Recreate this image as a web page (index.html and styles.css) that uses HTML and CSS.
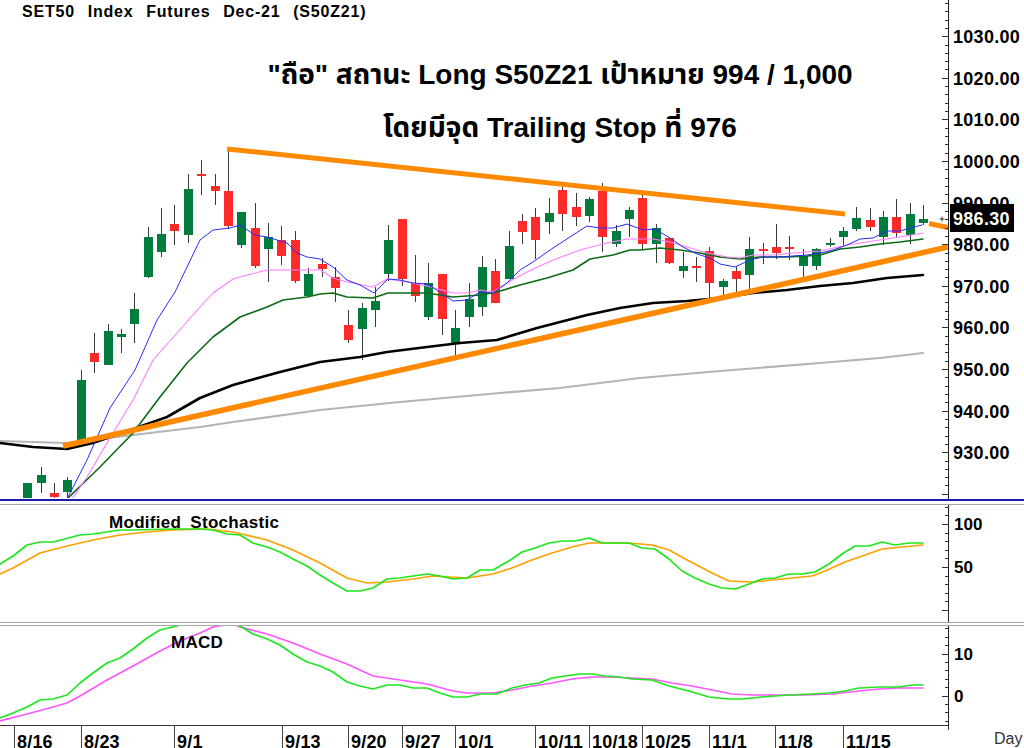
FILE: index.html
```html
<!DOCTYPE html>
<html lang="th">
<head>
<meta charset="utf-8">
<title>SET50 Index Futures Dec-21 (S50Z21)</title>
<link rel="stylesheet" href="styles.css">
</head>
<body>
<div class="chart">
  <div class="pane pane-main">
    <svg class="plot" id="plot-main" width="949" height="499"></svg>
    <svg class="axis" id="axis-main" width="75" height="499"></svg>
    <div class="title">SET50 Index Futures Dec-21 (S50Z21)</div>
    <div class="note">
      <p>"ถือ" สถานะ Long S50Z21 เป้าหมาย 994 / 1,000</p>
      <p>โดยมีจุด Trailing Stop ที่ 976</p>
    </div>
  </div>
  <div class="sep-blue"></div>
  <div class="sep-gray"></div>
  <div class="pane pane-stoch">
    <svg class="plot" id="plot-stoch" width="949" height="117"></svg>
    <svg class="axis" id="axis-stoch" width="75" height="117"></svg>
  </div>
  <div class="sep-double"></div>
  <div class="pane pane-macd">
    <svg class="plot" id="plot-macd" width="949" height="99"></svg>
    <svg class="axis" id="axis-macd" width="75" height="99"></svg>
  </div>
  <svg class="dates" id="dates" width="1024" height="24"></svg>
</div>
<script src="script.js"></script>
</body>
</html>
```
FILE: styles.css
```css
html, body {
  margin: 0;
  padding: 0;
  background: #ffffff;
}
.chart {
  width: 1024px;
  height: 748px;
  overflow: hidden;
  display: flex;
  flex-direction: column;
  font-family: "Liberation Sans", Arial, "Noto Sans Thai", "Noto Sans", sans-serif;
  color: #000;
}
.pane {
  display: flex;
  flex-direction: row;
  position: relative;
  flex: none;
}
.pane-main { height: 499px; }
.pane-stoch { height: 117px; }
.pane-macd { height: 99px; }
.plot, .axis, .dates { display: block; flex: none; }
.sep-blue {
  height: 2px;
  background: #1c1ca8;
  flex: none;
}
.sep-gray {
  height: 3px;
  border-bottom: 1px solid #a8a8a8;
  flex: none;
}
.sep-double {
  height: 2px;
  border-top: 1px solid #a8a8a8;
  border-bottom: 1px solid #a8a8a8;
  flex: none;
}
.title {
  position: absolute;
  left: 22px;
  top: 3px;
  font-size: 16px;
  line-height: 18px;
  font-weight: 700;
  letter-spacing: 0.8px;
  word-spacing: 7.5px;
  white-space: nowrap;
}
.note {
  position: absolute;
  left: 260px;
  top: 48px;
  width: 600px;
  text-align: center;
  font-size: 28px;
  font-weight: 700;
  line-height: 53px;
  white-space: nowrap;
}
.note p { margin: 0; }
.lbl-axis {
  font-size: 18px;
  font-weight: 700;
  letter-spacing: 0.3px;
}
.lbl-small {
  font-size: 17px;
  font-weight: 700;
}
.lbl-pane {
  font-size: 17px;
  font-weight: 700;
  word-spacing: 4px;
  letter-spacing: 0.3px;
}
.lbl-date {
  font-size: 18px;
  font-weight: 700;
  letter-spacing: 0.2px;
}
.lbl-day {
  font-size: 16px;
  font-weight: 400;
  fill: #333;
}
.lbl-price {
  font-size: 18px;
  font-weight: 700;
  fill: #fff;
  letter-spacing: 0.3px;
}
```
FILE: script.js
```js
(function () {
  var X0 = 14, DX = 13.37;
  function cx(i) { return X0 + DX * i; }

  // [index, bodyTop, bodyBottom, wickTop, wickBottom, up?]
  var candles = [
    [1,483,500,483,500,1],[2,475,483,467,493,1],[3,493,497,483,499,0],[4,480,492,477,499,1],
    [5,380,440,370,440,1],[6,353,362,333,373,0],[7,331,365,324,365,1],[8,334,337,329,353,1],
    [9,309,324,293,343,1],[10,237,277,227,278,1],[11,234,252,208,257,1],[12,224,231,205,245,0],
    [13,189,235,174,243,1],[14,174,176,160,195,0],[15,186,191,174,205,0],[16,191,226,148,229,0],
    [17,212,245,212,248,1],[18,228,266,203,268,0],[19,237,249,223,282,1],[20,240,256,226,265,0],
    [21,240,281,231,283,0],[22,274,296,268,296,1],[23,264,269,258,277,0],[24,277,288,267,302,0],
    [25,325,340,310,343,0],[26,308,329,303,360,1],[27,301,310,287,327,1],[28,240,274,225,281,1],
    [29,219,279,219,286,0],[30,283,296,255,302,0],[31,283,317,263,320,1],[32,274,319,274,335,0],
    [33,328,343,310,360,1],[34,299,317,283,327,1],[35,267,307,256,316,1],[36,271,303,259,303,0],
    [37,246,279,231,279,1],[38,221,232,214,244,0],[39,217,240,208,259,0],[40,213,222,198,234,1],
    [41,190,214,187,231,0],[42,207,217,193,226,0],[43,199,216,197,222,1],[44,191,237,183,252,0],
    [45,231,244,225,247,1],[46,210,219,207,237,1],[47,198,244,195,249,0],[48,228,244,224,263,1],
    [49,238,263,238,264,0],[50,266,271,252,278,1],[51,266,267,257,282,0],[52,251,283,247,298,0],
    [53,281,287,279,297,1],[54,271,279,266,296,0],[55,249,275,237,292,1],[56,249,251,243,264,0],
    [57,247,253,224,259,0],[58,247,249,236,260,0],[59,256,266,249,280,1],[60,249,266,248,270,1],
    [61,243,245,238,247,1],[62,231,237,227,245,1],[63,218,229,207,231,1],[64,220,227,208,231,0],
    [65,217,237,211,245,1],[66,217,233,199,237,0],[67,214,235,203,244,1],[68,219,223,205,225,1]
  ];

  var blue = [[67,499],[87,460],[110,408],[135,370],[157,320],[175,292],[200,240],[213,230],[230,228],[240,225],[255,235],[267,237],[287,243],[297,253],[307,257],[320,259],[333,267],[347,280],[360,285],[374,293],[388,279],[400,280],[413,283],[427,284],[440,292],[453,301],[467,300],[480,292],[493,293],[507,283],[520,270],[533,262],[553,248],[573,235],[587,226],[600,228],[613,228],[627,224],[643,230],[655,229],[670,238],[683,247],[697,254],[710,258],[720,264],[735,267],[750,260],[763,257],[777,257],[793,256],[807,255],[820,253],[833,250],[847,245],[860,239],[873,238],[887,231],[900,231],[910,228],[922,225]];
  var pink = [[72,499],[87,477],[107,443],[133,400],[153,360],[177,333],[200,307],[213,293],[233,279],[247,275],[267,270],[293,270],[320,270],[333,278],[347,282],[373,287],[387,279],[407,282],[427,286],[453,293],[467,293],[480,290],[493,292],[507,283],[527,272],[553,260],[580,250],[607,243],[627,239],[653,239],[670,242],[687,247],[707,253],[727,257],[740,258],[753,255],[773,255],[793,253],[820,251],[847,245],[873,241],[900,237],[923,233]];
  var dgreen = [[67,499],[100,467],[133,433],[160,397],[187,363],[213,337],[240,317],[267,307],[283,300],[307,297],[320,294],[333,293],[347,297],[373,298],[388,293],[400,293],[427,293],[453,297],[480,295],[497,292],[520,285],[547,278],[573,270],[590,259],[613,255],[630,250],[640,250],[660,248],[680,250],[700,253],[720,257],[740,259],[760,257],[787,257],[807,256],[820,255],[840,249],[860,247],[880,244],[900,242],[923,239]];
  var black = [[0,443],[33,447],[67,449],[93,443],[133,429],[167,417],[200,398],[233,385],[280,372],[320,362],[360,357],[387,352],[427,347],[460,343],[497,340],[537,328],[587,315],[620,308],[653,303],[687,301],[720,298],[753,293],[787,290],[820,286],[853,283],[887,278],[923,275]];
  var gray = [[0,441],[67,443],[133,435],[200,427],[233,422],[320,410],[400,402],[500,393],[560,388],[640,378],[720,371],[820,363],[880,358],[923,353]];

  var stK = [[0,563],[13,555],[27,544],[40,541],[53,541],[80,534],[93,533],[120,529],[133,529],[173,528],[200,528],[213,529],[227,533],[240,534],[253,542],[267,546],[280,551],[293,558],[307,565],[320,574],[333,582],[347,590],[360,590],[373,587],[387,578],[400,577],[413,575],[427,573],[440,575],[453,578],[467,577],[480,569],[493,569],[512,558],[522,551],[535,547],[549,542],[562,540],[575,540],[589,537],[602,542],[615,542],[629,542],[642,547],[655,548],[669,558],[682,570],[695,577],[709,583],[722,587],[735,588],[749,583],[762,578],[775,577],[789,573],[802,573],[815,571],[829,563],[842,553],[855,545],[869,545],[882,541],[895,544],[909,542],[923,542]];
  var stD = [[0,573],[13,567],[40,552],[67,545],[93,539],[120,534],[147,531],[173,529],[207,528],[233,531],[267,539],[293,549],[320,562],[347,577],[367,582],[387,581],[413,578],[433,575],[467,577],[493,573],[512,567],[532,559],[552,552],[572,546],[589,542],[605,542],[629,542],[652,544],[669,549],[689,560],[712,572],[729,580],[752,581],[772,579],[792,577],[812,575],[825,570],[845,561],[865,554],[882,548],[902,546],[923,544]];

  var mG = [[0,717],[13,712],[27,706],[40,699],[53,698],[67,694],[80,682],[93,672],[107,662],[120,657],[133,648],[147,637],[160,629],[177,625],[195,616],[215,612],[232,619],[240,625],[253,633],[267,638],[280,644],[293,653],[307,661],[320,665],[333,671],[347,681],[360,685],[373,688],[387,684],[400,684],[413,687],[427,687],[440,692],[453,696],[467,696],[480,693],[497,693],[512,687],[525,684],[539,682],[552,677],[565,675],[579,673],[592,673],[605,675],[619,676],[632,678],[652,679],[669,685],[689,690],[709,696],[729,698],[742,698],[762,696],[775,695],[789,694],[812,693],[829,692],[845,690],[859,687],[879,686],[899,686],[912,684],[923,684]];
  var mP = [[0,720],[27,713],[53,706],[67,702],[80,695],[107,679],[133,665],[160,650],[180,640],[200,632],[213,626],[224,624],[232,622],[240,626],[267,633],[293,642],[320,653],[347,663],[373,675],[400,679],[427,683],[453,690],[467,692],[493,692],[512,689],[532,685],[552,682],[572,678],[592,676],[612,676],[632,677],[652,678],[672,682],[692,685],[712,689],[732,693],[752,694],[779,694],[805,694],[832,693],[859,690],[879,688],[899,687],[923,687]];

  function pts(a, dy) {
    return a.map(function (p) { return p[0] + ',' + (p[1] - dy); }).join(' ');
  }
  function poly(a, dy, color, w) {
    return '<polyline points="' + pts(a, dy) + '" fill="none" stroke="' + color +
      '" stroke-width="' + w + '" stroke-linejoin="round" stroke-linecap="round"/>';
  }
  function line(x1, y1, x2, y2, color, w) {
    return '<line x1="' + x1 + '" y1="' + y1 + '" x2="' + x2 + '" y2="' + y2 +
      '" stroke="' + color + '" stroke-width="' + w + '"/>';
  }
  function text(x, y, cls, s) {
    return '<text x="' + x + '" y="' + y + '" class="' + cls + '">' + s + '</text>';
  }
  function ticks(yFn, from, to, step, majorEvery, h) {
    var s = '';
    for (var v = from; v <= to + 1e-9; v += step) {
      var y = Math.round(yFn(v)) + 0.5;
      if (y < 0 || y > h) continue;
      var major = Math.abs(Math.round(v / majorEvery) * majorEvery - v) < 1e-6;
      var len = major ? 6 : 3;
      s += line(948 - len, y, 948, y, '#333', 1);
    }
    s += line(948.5, 0, 948.5, h, '#222', 1);
    return s;
  }

  // ---------- main price pane ----------
  var priceY = function (p) { return 161 + (1000 - p) * 4.16; };
  var m = '<defs><clipPath id="cm"><rect x="0" y="0" width="948" height="498"/></clipPath></defs>';
  m += '<g clip-path="url(#cm)">';
  candles.forEach(function (c) {
    var x = cx(c[0]);
    var xr = Math.round(x) + 0.5;
    m += line(xr, c[3], xr, c[4], '#3a3a3a', 1);
    var top = c[1], bot = c[2];
    if (bot - top < 2) { bot = top + 2; }
    m += '<rect x="' + (Math.round(x) - 4) + '" y="' + top + '" width="9" height="' + (bot - top) +
      '" fill="' + (c[5] ? '#007d3c' : '#ff2a2a') + '"/>';
  });
  m += poly(gray, 0, '#b4b4b4', 2.2);
  m += poly(black, 0, '#000000', 2.6);
  m += poly(dgreen, 0, '#0b6b12', 1.6);
  m += poly(pink, 0, '#ff7dff', 1.1);
  m += poly(blue, 0, '#2a2aff', 1);
  m += line(227, 149, 845, 214, '#ff8a00', 5);
  m += line(929, 223.5, 948, 227.5, '#ff8a00', 5);
  m += line(63, 446, 948, 247, '#ff8a00', 5.5);
  m += line(939.5, 219, 944.5, 219, '#333', 1);
  m += line(942, 216.5, 942, 221.5, '#333', 1);
  m += '</g>';
  m += ticks(priceY, 920, 1040, 2, 10, 499);
  document.getElementById('plot-main').innerHTML = m;

  var a = '';
  for (var p = 930; p <= 1030; p += 10) {
    a += text(4, Math.round(priceY(p)) + 7, 'lbl-axis', p.toFixed(2));
  }
  a += '<rect x="1" y="204" width="64" height="28" fill="#000"/>';
  a += text(4, 225, 'lbl-price', '986.30');
  document.getElementById('axis-main').innerHTML = a;

  // ---------- stochastic pane ----------
  var OS = 504;
  var stochY = function (v) { return 105 - v * 0.86; };
  var s = '<defs><clipPath id="cs"><rect x="0" y="0" width="948" height="117"/></clipPath></defs>';
  s += '<g clip-path="url(#cs)">';
  s += poly(stD, OS, '#ffa000', 1.7);
  s += poly(stK, OS, '#1ee61e', 1.7);
  s += '</g>';
  s += text(109, 23, 'lbl-pane', 'Modified Stochastic');
  s += ticks(stochY, 0, 130, 10, 50, 117);
  document.getElementById('plot-stoch').innerHTML = s;
  document.getElementById('axis-stoch').innerHTML =
    text(5, Math.round(stochY(100)) + 6, 'lbl-small', '100') +
    text(5, Math.round(stochY(50)) + 6, 'lbl-small', '50');

  // ---------- MACD pane ----------
  var OM = 625;
  var macdY = function (v) { return 69.5 - v * 4.2; };
  var mc = '<defs><clipPath id="cmc"><rect x="0" y="0" width="948" height="99"/></clipPath></defs>';
  mc += '<g clip-path="url(#cmc)">';
  mc += poly(mP, OM, '#ff55ff', 1.7);
  mc += poly(mG, OM, '#1ee61e', 1.7);
  mc += '</g>';
  mc += text(171, 22, 'lbl-pane', 'MACD');
  mc += ticks(macdY, -8, 18, 2, 10, 99);
  document.getElementById('plot-macd').innerHTML = mc;
  document.getElementById('axis-macd').innerHTML =
    text(5, Math.round(macdY(10)) + 6, 'lbl-small', '10') +
    text(5, Math.round(macdY(0)) + 6, 'lbl-small', '0');

  // ---------- date axis ----------
  var dates = [[14,'8/16'],[81,'8/23'],[174,'9/1'],[282,'9/13'],[348,'9/20'],[402,'9/27'],
    [455,'10/1'],[535,'10/11'],[589,'10/18'],[642,'10/25'],[709,'11/1'],[775,'11/8'],[843,'11/15']];
  var d = line(0, 0.5, 949, 0.5, '#333', 1);
  dates.forEach(function (t) {
    d += line(t[0] + 0.5, 0, t[0] + 0.5, 24, '#444', 1);
    d += text(t[0] + 3, 23, 'lbl-date', t[1]);
  });
  d += line(948.5, 0, 948.5, 5, '#333', 1);
  d += text(994, 18.5, 'lbl-day', 'Day');
  document.getElementById('dates').innerHTML = d;
})();
```
